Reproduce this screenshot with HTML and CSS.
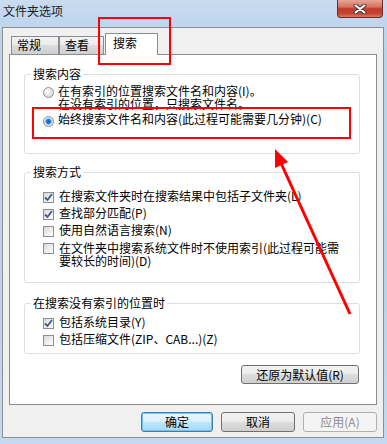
FILE: index.html
```html
<!DOCTYPE html>
<html lang="zh-CN">
<head>
    <meta charset="UTF-8">
    <title>文件夹选项</title>
    <link rel="stylesheet" href="styles.css">
</head>
<body>

<div class="window">
    <div class="titlebar">
        <div class="title">文件夹选项</div>
        <div class="close">
            <svg width="14" height="10" viewBox="0 0 14 10">
                <path d="M2.5 1.5 L11.5 8.5 M11.5 1.5 L2.5 8.5" stroke="#404040" stroke-width="4" stroke-linecap="round"/>
                <path d="M2.5 1.5 L11.5 8.5 M11.5 1.5 L2.5 8.5" stroke="#fff" stroke-width="2" stroke-linecap="round"/>
            </svg>
        </div>
    </div>

    <div class="dialog">
        <div class="tabs">
            <div class="tab tab-general">常规</div>
            <div class="tab tab-view">查看</div>
            <div class="tab active">搜索</div>
        </div>

        <div class="panel">
            <!-- 搜索内容 -->
            <fieldset class="group group-content">
                <legend>搜索内容</legend>
                <div class="opt">
                    <span class="radio"></span>
                    <span class="label two-lines">在有索引的位置搜索文件名和内容(I)。<br>在没有索引的位置，只搜索文件名。</span>
                </div>
                <div class="opt">
                    <span class="radio checked"></span>
                    <span class="label">始终搜索文件名和内容(此过程可能需要几分钟)(C)</span>
                </div>
            </fieldset>

            <!-- 搜索方式 -->
            <fieldset class="group group-how">
                <legend>搜索方式</legend>
                <div class="opt">
                    <span class="check on"><svg width="9" height="9" viewBox="0 0 9 9"><path d="M1 4.5 L3.5 7 L8 1" fill="none" stroke="#3d5896" stroke-width="1.8"/></svg></span>
                    <span class="label">在搜索文件夹时在搜索结果中包括子文件夹(L)</span>
                </div>
                <div class="opt">
                    <span class="check on"><svg width="9" height="9" viewBox="0 0 9 9"><path d="M1 4.5 L3.5 7 L8 1" fill="none" stroke="#3d5896" stroke-width="1.8"/></svg></span>
                    <span class="label">查找部分匹配(P)</span>
                </div>
                <div class="opt">
                    <span class="check"></span>
                    <span class="label">使用自然语言搜索(N)</span>
                </div>
                <div class="opt">
                    <span class="check"></span>
                    <span class="label two-lines">在文件夹中搜索系统文件时不使用索引(此过程可能需<br>要较长的时间)(D)</span>
                </div>
            </fieldset>

            <!-- 在搜索没有索引的位置时 -->
            <fieldset class="group group-noindex">
                <legend>在搜索没有索引的位置时</legend>
                <div class="opt">
                    <span class="check on"><svg width="9" height="9" viewBox="0 0 9 9"><path d="M1 4.5 L3.5 7 L8 1" fill="none" stroke="#3d5896" stroke-width="1.8"/></svg></span>
                    <span class="label">包括系统目录(Y)</span>
                </div>
                <div class="opt">
                    <span class="check"></span>
                    <span class="label">包括压缩文件(ZIP、CAB...)(Z)</span>
                </div>
            </fieldset>

            <div class="reset-row">
                <button class="btn btn-reset">还原为默认值(R)</button>
            </div>
        </div>

        <div class="buttons">
            <button class="btn btn-default">确定</button>
            <button class="btn btn-wide">取消</button>
            <button class="btn btn-wide" disabled>应用(A)</button>
        </div>
    </div>

    <!-- 红色标注 -->
    <svg class="annot" width="387" height="444" viewBox="0 0 387 444">
        <rect x="99" y="18" width="71" height="46" fill="none" stroke="#f00" stroke-width="2"/>
        <rect x="33" y="108" width="317" height="30" fill="none" stroke="#f00" stroke-width="2"/>
        <line x1="350" y1="314" x2="280" y2="161" stroke="#f00" stroke-width="3"/>
        <polygon points="275,149 288,162 275,168" fill="#f00"/>
    </svg>
</div>

</body>
</html>
```

FILE: styles.css
```css
* {
    box-sizing: border-box;
}

body {
    margin: 0;
    font-family: "Noto Sans CJK SC", sans-serif;
    font-size: 12px;
    color: #000;
}

.window {
    position: relative;
    width: 387px;
    height: 444px;
    overflow: hidden;
    background: linear-gradient(to bottom, #c9dcf0 0%, #bcd3ec 8%, #b9d1ea 60%, #c4d9f0 100%);
}

/* Barra de título */
.titlebar {
    display: flex;
    justify-content: space-between;
    height: 27px;
}

.title {
    padding: 3px 0 0 3px;
    line-height: 16px;
    color: #1e1e1e;
}

.close {
    display: flex;
    align-items: center;
    justify-content: center;
    width: 46px;
    height: 18px;
    margin-right: 4px;
    border: 1px solid #6e2a22;
    border-top: none;
    border-radius: 0 0 4px 4px;
    background: linear-gradient(to bottom, #e6a797 0%, #d7725f 40%, #c23b2c 52%, #c64434 80%, #dd7a62 100%);
}

/* Cuerpo del diálogo */
.dialog {
    height: 411px;
    margin: 0 3px 0 2px;
    padding: 5px 6px 0;
    border: 1px solid #8e8f8f;
    background: #f0f0f0;
}

.tabs {
    display: flex;
    align-items: flex-end;
    height: 21px;
    padding-left: 2px;
}

.tab {
    height: 18px;
    padding-left: 5px;
    line-height: 16px;
    border: 1px solid #898c95;
    border-bottom: none;
    background: linear-gradient(to bottom, #f3f3f3 0%, #ebebeb 50%, #dddddd 50%, #cfcfcf 100%);
}

.tab-general {
    width: 48px;
}

.tab-view {
    width: 45px;
}

.tab.active {
    position: relative;
    z-index: 1;
    width: 53px;
    height: 22px;
    margin-left: 1px;
    margin-bottom: -1px;
    padding: 1px 0 0 7px;
    background: #fff;
}

.panel {
    height: 351px;
    padding: 12px 16px 0 14px;
    border: 1px solid #898c95;
    background: #fff;
}

/* Grupos */
.group {
    margin: 0;
    padding: 0 8px 0 18px;
    border: 1px solid #d5dfe5;
    border-radius: 3px;
}

.group legend {
    margin-left: -12px;
    padding: 0 2px;
    line-height: 14px;
}

.group-content {
    padding-top: 3px;
    padding-bottom: 26px;
}

.group-how {
    margin-top: 11px;
    padding-top: 11px;
    padding-bottom: 15px;
}

.group-noindex {
    margin-top: 13px;
    padding-top: 6px;
    padding-bottom: 7px;
}

.opt {
    display: flex;
    align-items: flex-start;
    gap: 4px;
    line-height: 12px;
}

.opt + .opt {
    margin-top: 4px;
}

.label {
    white-space: nowrap;
}

.label.two-lines {
    line-height: 13px;
}

.group-content .opt + .opt {
    margin-top: 3px;
}

.radio {
    flex: none;
    width: 11px;
    height: 11px;
    margin-top: 3px;
    border: 1px solid #8e8f8f;
    border-radius: 50%;
    background: radial-gradient(circle at 35% 35%, #ffffff 0%, #e4e4e4 60%, #cfcfcf 100%);
}

.radio.checked {
    background: radial-gradient(circle, #0a4fa8 0%, #2a8bea 35%, #7fc0f5 48%, #e8e8e8 55%, #d6d6d6 100%);
}

.check {
    display: flex;
    align-items: center;
    justify-content: center;
    flex: none;
    width: 11px;
    height: 11px;
    margin-top: 2px;
    margin-right: 1px;
    border: 1px solid #8e8f8f;
    background: linear-gradient(135deg, #d8d8d8 0%, #f0f0f0 60%, #fcfcfc 100%);
}

/* Botones */
.btn {
    height: 20px;
    padding: 0;
    font-family: inherit;
    font-size: 12px;
    line-height: 16px;
    color: #000;
    border: 1px solid #707070;
    border-radius: 3px;
    background: linear-gradient(to bottom, #f2f2f2 0%, #ebebeb 50%, #dddddd 50%, #cfcfcf 100%);
}

.reset-row {
    display: flex;
    justify-content: flex-end;
    margin-top: 11px;
    padding-right: 1px;
}

.btn-reset {
    width: 118px;
    height: 19px;
}

.buttons {
    display: flex;
    justify-content: flex-end;
    gap: 8px;
    margin-top: 7px;
}

.btn-default {
    width: 72px;
    border-color: #3c7fb1;
    box-shadow: inset 0 0 0 1px #6fc3f0;
    background: linear-gradient(to bottom, #eaf6fd 0%, #d9f0fc 50%, #bee6fd 50%, #a7d9f5 100%);
}

.btn-wide {
    width: 74px;
}

.btn:disabled {
    color: #8d8d8d;
    border-color: #adb2b5;
    background: #f4f4f4;
}

/* Anotaciones en rojo */
.annot {
    position: absolute;
    top: 0;
    left: 0;
    pointer-events: none;
}
```
